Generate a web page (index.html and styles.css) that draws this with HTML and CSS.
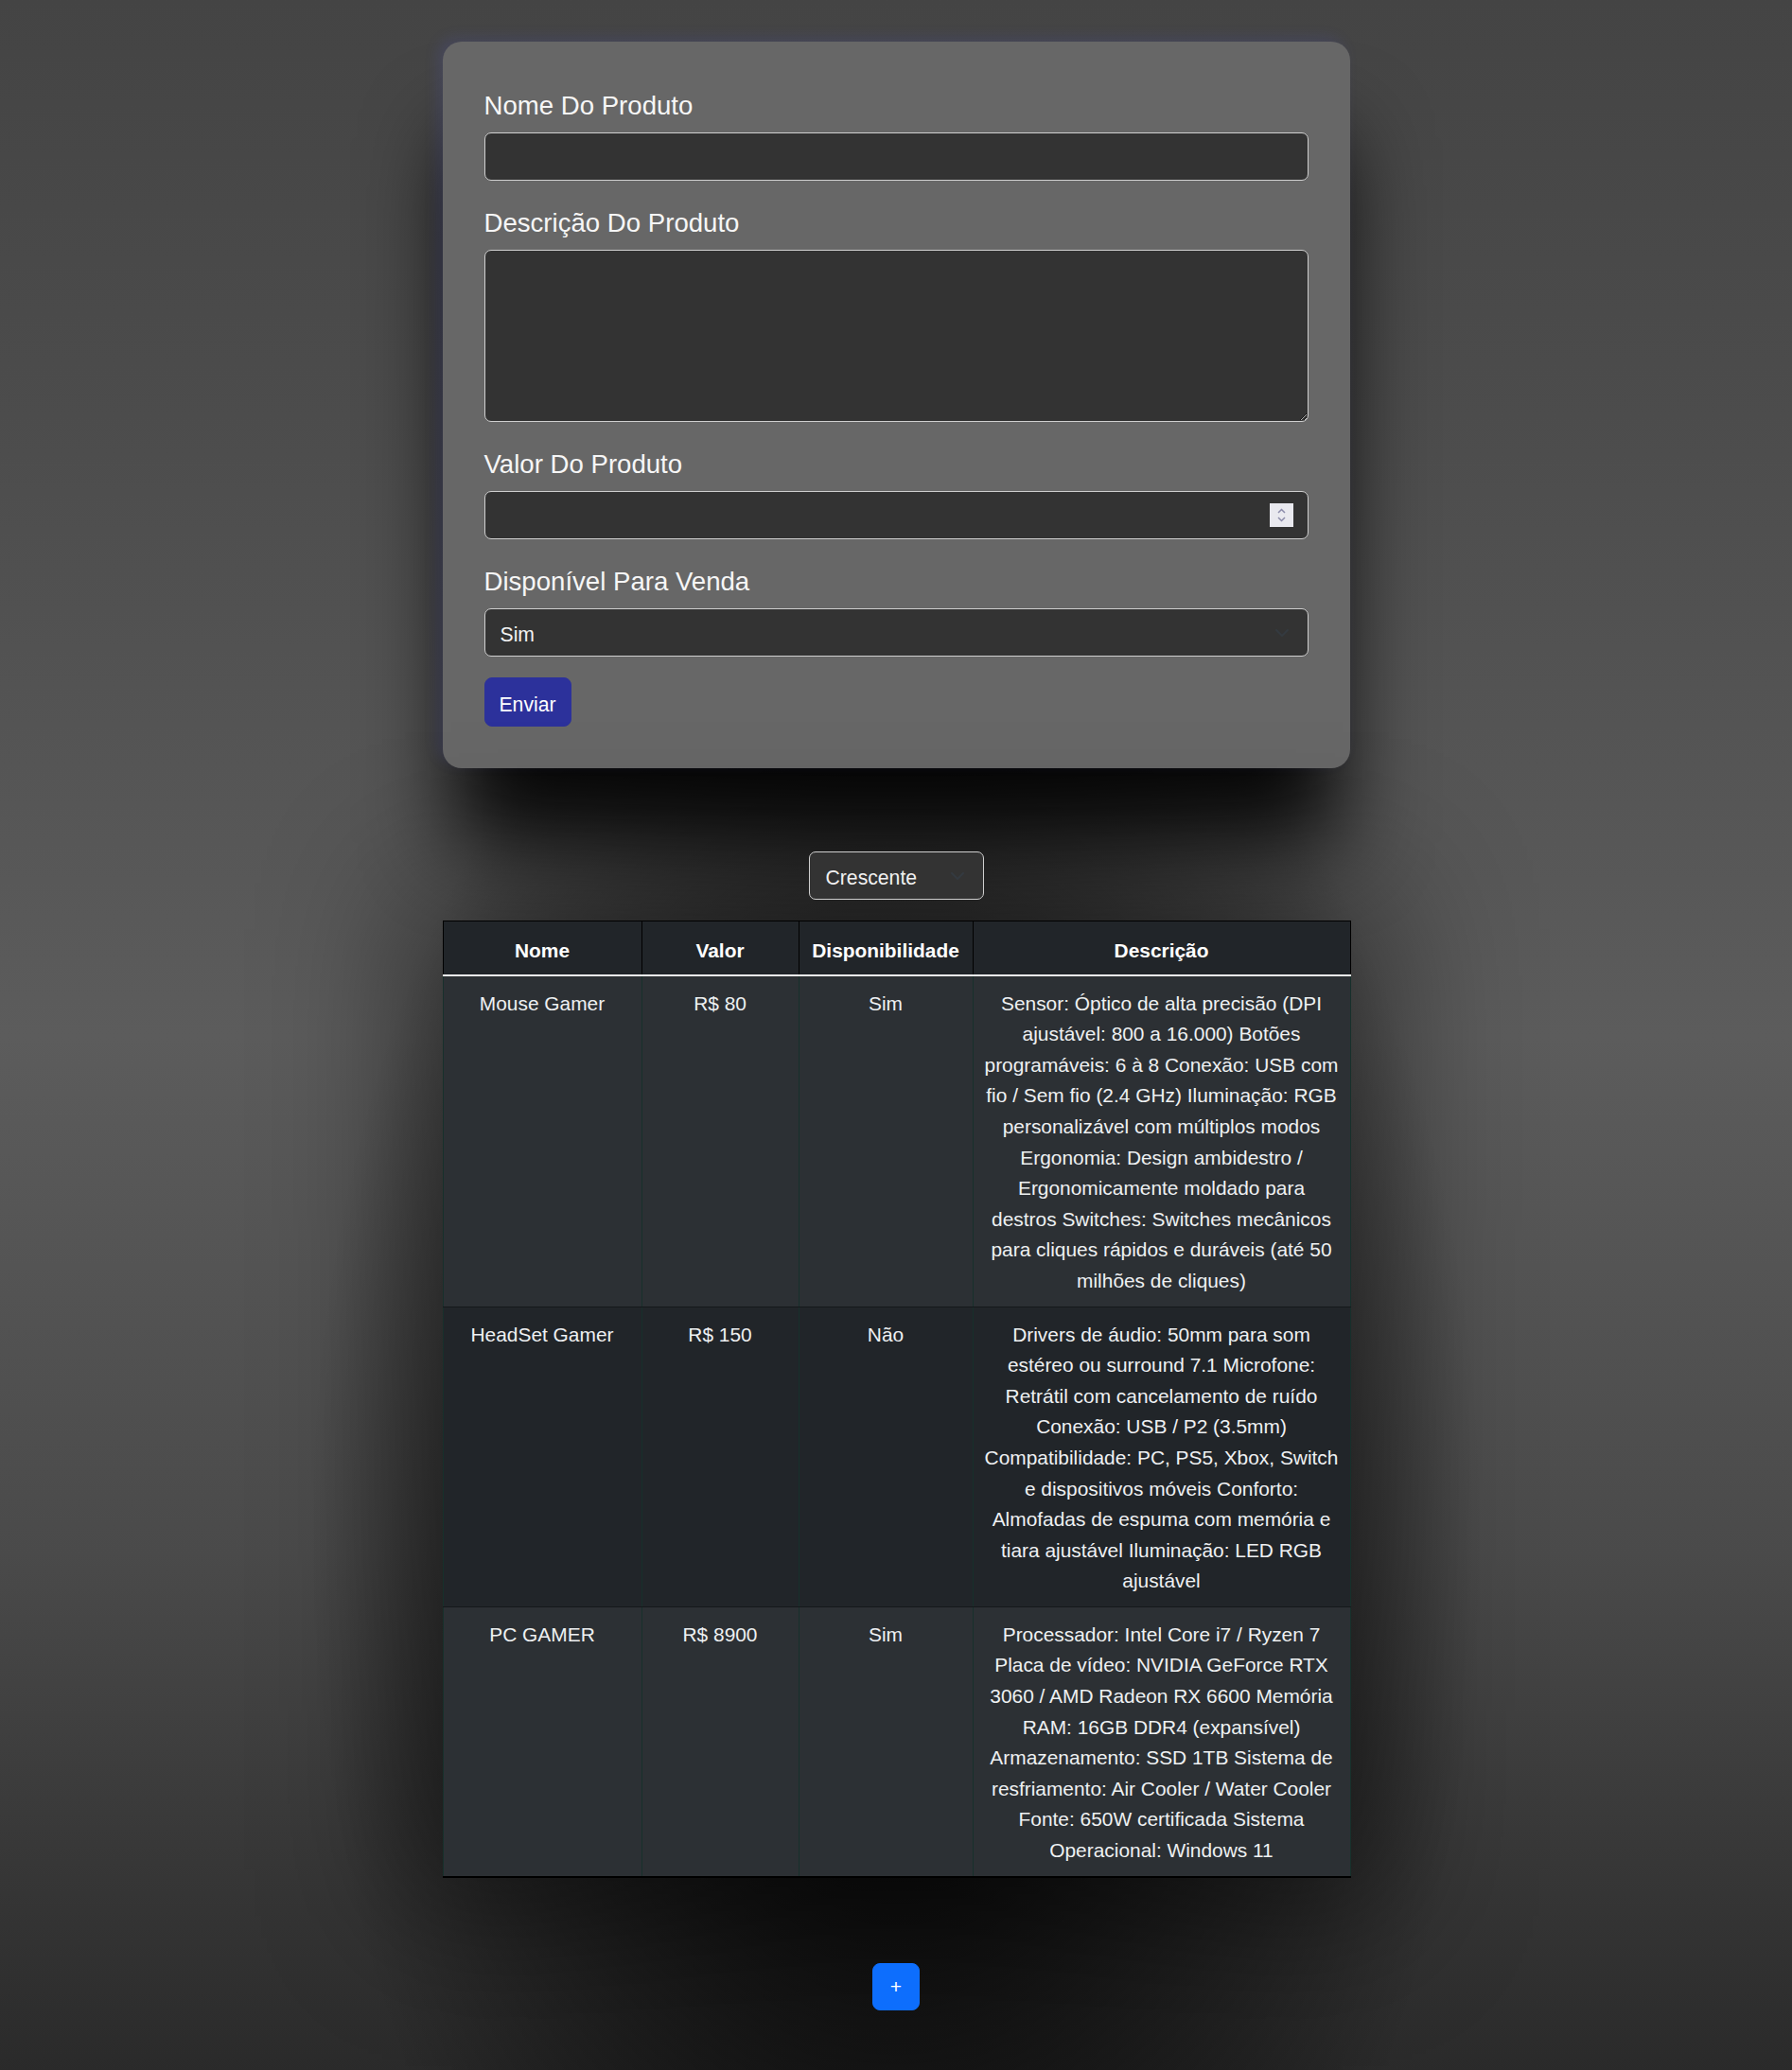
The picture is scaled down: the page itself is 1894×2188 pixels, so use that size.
FILE: index.html
```html
<!DOCTYPE html>
<html lang="pt-BR">
<head>
    <meta charset="UTF-8" />
    <meta name="viewport" content="width=device-width, initial-scale=1.0" />
    <title>Cadastro de Produtos</title>
    <link rel="stylesheet" href="styles.css">
</head>
<body>
    <main class="pagina">
        <!-- Formulário de cadastro -->
        <form class="cartao">
            <div class="campo">
                <label for="nome">Nome Do Produto</label>
                <input type="text" id="nome" class="entrada" />
            </div>
            <div class="campo">
                <label for="descricao">Descrição Do Produto</label>
                <textarea id="descricao" class="entrada area"></textarea>
            </div>
            <div class="campo">
                <label for="valor">Valor Do Produto</label>
                <div class="numero">
                    <input type="number" id="valor" class="entrada" />
                    <span class="spinner">
                        <svg width="25" height="25" viewBox="0 0 25 25">
                            <path d="M9 10 L12.5 6.5 L16 10" fill="none" stroke="#8c8cab" stroke-width="1.5"/>
                            <path d="M9 15 L12.5 18.5 L16 15" fill="none" stroke="#8c8cab" stroke-width="1.5"/>
                        </svg>
                    </span>
                </div>
            </div>
            <div class="campo">
                <label for="disponivel">Disponível Para Venda</label>
                <select id="disponivel" class="entrada seletor">
                    <option>Sim</option>
                    <option>Não</option>
                </select>
            </div>
            <button type="submit" class="btn-enviar">Enviar</button>
        </form>

        <!-- Ordenação -->
        <div class="ordenar">
            <select class="entrada seletor ordem">
                <option>Crescente</option>
                <option>Decrescente</option>
            </select>
        </div>

        <!-- Lista de produtos -->
        <table class="tabela">
            <colgroup>
                <col class="c-nome">
                <col class="c-valor">
                <col class="c-disp">
                <col class="c-desc">
            </colgroup>
            <thead>
                <tr>
                    <th>Nome</th>
                    <th>Valor</th>
                    <th>Disponibilidade</th>
                    <th>Descrição</th>
                </tr>
            </thead>
            <tbody>
                <tr>
                    <td>Mouse Gamer</td>
                    <td>R$ 80</td>
                    <td>Sim</td>
                    <td>Sensor: Óptico de alta precisão (DPI ajustável: 800 a 16.000) Botões programáveis: 6 à 8 Conexão: USB com fio / Sem fio (2.4 GHz) Iluminação: RGB personalizável com múltiplos modos Ergonomia: Design ambidestro / Ergonomicamente moldado para destros Switches: Switches mecânicos para cliques rápidos e duráveis (até 50 milhões de cliques)</td>
                </tr>
                <tr>
                    <td>HeadSet Gamer</td>
                    <td>R$ 150</td>
                    <td>Não</td>
                    <td>Drivers de áudio: 50mm para som estéreo ou surround 7.1 Microfone: Retrátil com cancelamento de ruído Conexão: USB / P2 (3.5mm) Compatibilidade: PC, PS5, Xbox, Switch e dispositivos móveis Conforto: Almofadas de espuma com memória e tiara ajustável Iluminação: LED RGB ajustável</td>
                </tr>
                <tr>
                    <td>PC GAMER</td>
                    <td>R$ 8900</td>
                    <td>Sim</td>
                    <td>Processador: Intel Core i7 / Ryzen 7 Placa de vídeo: NVIDIA GeForce RTX 3060 / AMD Radeon RX 6600 Memória RAM: 16GB DDR4 (expansível) Armazenamento: SSD 1TB Sistema de resfriamento: Air Cooler / Water Cooler Fonte: 650W certificada Sistema Operacional: Windows 11</td>
                </tr>
            </tbody>
        </table>

        <div class="acoes">
            <button class="btn-mais">+</button>
        </div>
    </main>
</body>
</html>
```

FILE: styles.css
```css
* {
    box-sizing: border-box;
}

body {
    margin: 0;
    min-height: 2188px;
    font-family: 'Liberation Sans', Arial, sans-serif;
    font-size: 21.2px;
    line-height: 32.6px;
    color: #f1f1f1;
    background:
        radial-gradient(ellipse 620px 1050px at 50% 74%, rgba(0, 0, 0, 1) 0%, rgba(0, 0, 0, 0.75) 35%, rgba(0, 0, 0, 0) 100%),
        linear-gradient(180deg, #444 0%, #4c4c4c 20%, #5c5c5c 50%, #4a4a4a 75%, #2a2a2a 100%);
}

.pagina {
    width: 959px;
    margin: 0 auto;
    padding-top: 44px;
    padding-bottom: 65px;
}

/* cartão do formulário */
.cartao {
    background-color: #676767;
    border-radius: 20px;
    padding: 45px 44px 44px;
    box-shadow: -6px -5px 14px rgba(80, 90, 200, 0.16), 0 90px 90px -10px rgba(0, 0, 0, 0.9);
}

.campo {
    margin-bottom: 22px;
}

.campo label {
    display: block;
    font-size: 27.6px;
    line-height: 41px;
    padding-top: 2px;
    margin-bottom: 8px;
    color: #f6f6f6;
}

.entrada {
    display: block;
    width: 100%;
    height: 51px;
    padding: 4px 16px 0;
    font-family: inherit;
    font-size: 21.2px;
    color: #f1f1f1;
    background-color: #333333;
    border: 1px solid #cfcfcf;
    border-radius: 7px;
    outline: none;
}

.area {
    height: 182px;
    resize: vertical;
}

.numero {
    position: relative;
}

.numero input::-webkit-inner-spin-button,
.numero input::-webkit-outer-spin-button {
    -webkit-appearance: none;
    margin: 0;
}

.spinner {
    position: absolute;
    right: 16px;
    top: 13px;
    width: 25px;
    height: 25px;
    background-color: #e9e9ef;
}

.spinner svg {
    display: block;
}

.seletor {
    appearance: none;
    -webkit-appearance: none;
    background-image: url("data:image/svg+xml,%3csvg xmlns='http://www.w3.org/2000/svg' viewBox='0 0 16 16'%3e%3cpath fill='none' stroke='%23343a40' stroke-linecap='round' stroke-linejoin='round' stroke-width='2' d='m2 5 6 6 6-6'/%3e%3c/svg%3e");
    background-repeat: no-repeat;
    background-position: right 16px center;
    background-size: 22px 16px;
}

.btn-enviar {
    display: block;
    width: 92px;
    height: 52px;
    padding: 5px 0 0;
    font-family: inherit;
    font-size: 21.2px;
    color: #ffffff;
    background-color: #2c319b;
    border: 1px solid #2c319b;
    border-radius: 8px;
    cursor: pointer;
}

/* ordenação */
.ordenar {
    display: flex;
    justify-content: center;
    margin-top: 88px;
    margin-bottom: 22px;
}

.ordem {
    width: 185px;
    height: 51px;
    padding-left: 17px;
}

/* tabela */
.tabela {
    width: 100%;
    border-collapse: collapse;
    table-layout: fixed;
    font-size: 20.9px;
    border: 1px solid #000;
    border-bottom-width: 2px;
    box-shadow: 0 0 140px 40px rgba(0, 0, 0, 0.45);
}

.c-nome { width: 210px; }
.c-valor { width: 166px; }
.c-disp { width: 184px; }
.c-desc { width: 399px; }

.tabela th,
.tabela td {
    padding: 13px 11px 10px;
    text-align: center;
    vertical-align: top;
}

.tabela th {
    padding-top: 15px;
    padding-bottom: 8px;
    background-color: #212529;
    color: #ffffff;
    font-weight: 700;
    border: 1px solid #000;
    border-bottom: 2px solid #f1f1f1;
}

.tabela td {
    border: 1px solid #17302b;
    border-top-color: #15181b;
    border-bottom-color: #15181b;
    color: #eef0f2;
}

.tabela tbody tr:nth-child(odd) td {
    background-color: #2c3034;
}

.tabela tbody tr:nth-child(even) td {
    background-color: #212529;
}

/* botão adicionar */
.acoes {
    display: flex;
    justify-content: center;
    margin-top: 90px;
}

.btn-mais {
    width: 50px;
    height: 50px;
    padding: 0;
    font-family: inherit;
    font-size: 21px;
    color: #ffffff;
    background-color: #0d6efd;
    border: 1px solid #0d6efd;
    border-radius: 8px;
    cursor: pointer;
}
```
